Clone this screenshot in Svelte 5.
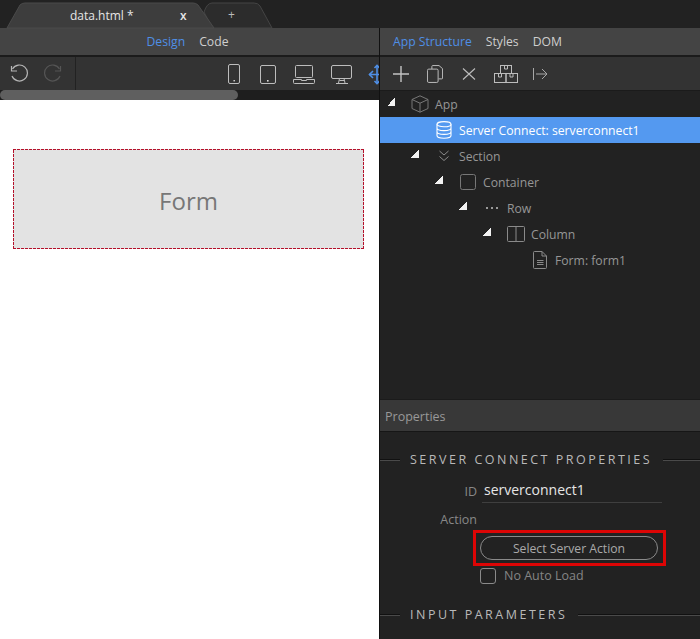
<script>
  const devices = [
    { w: 19, h: 26, shape: "phone" },
    { w: 19, h: 26, shape: "tablet" },
    { w: 24, h: 26, shape: "laptop" },
    { w: 24, h: 26, shape: "desktop" }
  ];
  const rows = [
    { label: "Section", depth: 1, icon: "section", arrow: true },
    { label: "Container", depth: 2, icon: "container", arrow: true },
    { label: "Row", depth: 3, icon: "row", arrow: true },
    { label: "Column", depth: 4, icon: "column", arrow: true },
    { label: "Form: form1", depth: 5, icon: "form", arrow: false }
  ];
</script>

<div class="app">
  <div class="tabbar">
    <div class="tab active">
      <svg class="tab-bg" width="200" height="28" viewBox="0 0 200 28">
        <path d="M0 28 L13 5 Q15 3 18 3 L186 3 Q189 3 191 5 L207 28 Z" fill="#3d3d3d" stroke="#4a4a4a" />
      </svg>
      <span class="tab-name">data.html *</span>
      <span class="tab-close">x</span>
    </div>
    <div class="tab add">
      <svg class="tab-bg" width="73" height="28" viewBox="0 0 73 28">
        <path d="M12 28 L4 12 Q7 3 12 3 L54 3 Q58 3 60 6 L72 28 Z" fill="#2c2c2c" stroke="#444" />
      </svg>
      <span class="tab-plus">+</span>
    </div>
  </div>

  <div class="columns">
    <div class="left">
      <div class="subnav center">
        <span class="blue">Design</span>
        <span>Code</span>
      </div>
      <div class="toolbar left-tools">
        <div class="history">
          <svg width="20" height="20" viewBox="0 0 20 20" fill="none" stroke="#b5b5b5" stroke-width="1.2">
            <path d="M3.5 5 A8 8 0 1 1 3 12" />
            <path d="M2.5 2 V7 H8" />
          </svg>
          <svg width="20" height="20" viewBox="0 0 20 20" fill="none" stroke="#555" stroke-width="1.2">
            <path d="M16.5 5 A8 8 0 1 0 17 12" />
            <path d="M17.5 2 V7 H12" />
          </svg>
        </div>
        <div class="devices">
          {#each devices as d}
            <svg width={d.w} height={d.h} viewBox="0 0 {d.w} {d.h}" fill="none" stroke="#bdbdbd" stroke-width="1">
              {#if d.shape === "phone"}
                <rect x="2.5" y="3.5" width="11" height="19" rx="1.5" />
                <rect x="7.5" y="19" width="1.4" height="1.4" fill="#ddd" stroke="none" />
              {:else if d.shape === "tablet"}
                <rect x="1.5" y="4.5" width="15" height="18" rx="1.5" />
                <rect x="8" y="19" width="1.6" height="1.6" fill="#ddd" stroke="none" />
              {:else if d.shape === "laptop"}
                <rect x="3.5" y="4.5" width="17" height="12" rx="1" />
                <path d="M1.5 18.5 H9.5 V19.5 H14.5 V18.5 H22.5 V21.5 Q22.5 22.5 21.5 22.5 H2.5 Q1.5 22.5 1.5 21.5 Z" />
              {:else}
                <rect x="1.5" y="4.5" width="20" height="13" rx="1.5" />
                <path d="M9.5 17.5 L8.5 22 M14 17.5 L15 22 M6 22.5 H18 M9.5 19.5 H14" />
              {/if}
            </svg>
          {/each}
          <svg width="12" height="26" viewBox="0 0 12 26" fill="none" stroke="#4f8fe6" stroke-width="1.6">
            <path d="M1 13.5 H12 M9 5 V22" />
            <path d="M5 10 L1.5 13.5 L5 17 M6.5 7 L9 4.5 L11.5 7 M6.5 20 L9 22.5 L11.5 20" />
          </svg>
        </div>
      </div>
      <div class="scrolltrack"><div class="scrollthumb"></div></div>
      <div class="canvas">
        <div class="form-box">Form</div>
      </div>
    </div>

    <div class="right">
      <div class="subnav">
        <span class="blue">App Structure</span>
        <span>Styles</span>
        <span>DOM</span>
      </div>
      <div class="toolbar right-tools">
        <svg width="16" height="16" viewBox="0 0 16 16" stroke="#c4c4c4" stroke-width="1.4" fill="none"><path d="M8 0 V16 M0 8 H16" /></svg>
        <svg width="16" height="18" viewBox="0 0 18 20" stroke="#bdbdbd" stroke-width="1.1" fill="none">
          <path d="M5.5 4.5 V1.5 Q5.5 .5 6.5 .5 H13.5 L17.5 4 V14.5 Q17.5 15.5 16.5 15.5 H13" />
          <rect x=".5" y="4.5" width="12" height="15" rx="1.5" />
        </svg>
        <svg width="15" height="12" viewBox="0 0 15 12" stroke="#bdbdbd" stroke-width="1.1" fill="none"><path d="M2 .5 L14 11.5 M14 .5 L2 11.5" /></svg>
        <svg width="24" height="18" viewBox="0 0 24 18" stroke="#bdbdbd" stroke-width="1" fill="none">
          <rect x="6.5" y=".5" width="11" height="8" />
          <rect x=".5" y="8.5" width="11.5" height="9" />
          <rect x="12" y="8.5" width="11.5" height="9" />
          <path d="M10.5 .5 V4 H13.5 V.5 M4.5 8.5 V12 H7.5 V8.5 M16 8.5 V12 H19 V8.5" />
        </svg>
        <svg class="indent" width="16" height="14" viewBox="0 0 16 14" stroke="#a8a8a8" stroke-width="1" fill="none"><path d="M1.5 1 V13 M4 7 H15 M10 2 L15 7 L10 12" /></svg>
      </div>

      <div class="tree">
        <div class="tree-row depth-0">
          <i class="caret"></i>
          <svg class="node-icon" width="18" height="18" viewBox="0 0 18 18" fill="none" stroke="#777" stroke-width="1">
            <path d="M9 .8 L17 4.5 V13.5 L9 17.2 L1 13.5 V4.5 Z M1 4.5 L9 8.2 L17 4.5 M9 8.2 V17.2" />
          </svg>
          <span>App</span>
        </div>
        <div class="tree-row selected">
          <svg class="db" width="16" height="18" viewBox="0 0 16 18" fill="none" stroke="#fff" stroke-width="1.1">
            <ellipse cx="8" cy="3.2" rx="7" ry="2.6" />
            <path d="M1 3.2 V14.5 C1 16 4 17.2 8 17.2 S15 16 15 14.5 V3.2 M1 7 C1 8.5 4 9.6 8 9.6 S15 8.5 15 7 M1 10.8 C1 12.3 4 13.4 8 13.4 S15 12.3 15 10.8" />
          </svg>
          <span>Server Connect: serverconnect1</span>
        </div>
        {#each rows as r}
          <div class="tree-row" style="padding-left: {r.depth * 24 + 7}px">
            {#if r.arrow}<i class="caret"></i>{:else}<i class="caret none"></i>{/if}
            <span class="icon-box">
              {#if r.icon === "section"}
                <svg width="12" height="14" viewBox="0 0 12 14" fill="none" stroke="#8a8a8a" stroke-width="1"><path d="M1.5 2 L6 6 L10.5 2 M1.5 7.5 L6 11.5 L10.5 7.5" /></svg>
              {:else if r.icon === "container"}
                <svg width="16" height="16" viewBox="0 0 16 16" fill="none" stroke="#777" stroke-width="1"><rect x=".5" y=".5" width="15" height="15" rx="2" /></svg>
              {:else if r.icon === "row"}
                <svg width="12" height="4" viewBox="0 0 12 4" fill="#999"><rect x="0" y="1" width="2" height="2" /><rect x="5" y="1" width="2" height="2" /><rect x="10" y="1" width="2" height="2" /></svg>
              {:else if r.icon === "column"}
                <svg width="18" height="16" viewBox="0 0 18 16" fill="none" stroke="#8a8a8a" stroke-width="1"><rect x=".5" y=".5" width="17" height="15" rx="1" /><path d="M9 .5 V15.5" /></svg>
              {:else}
                <svg width="14" height="18" viewBox="0 0 14 18" fill="none" stroke="#8a8a8a" stroke-width="1"><path d="M.5 1.5 Q.5 .5 1.5 .5 H9 L13.5 5 V16.5 Q13.5 17.5 12.5 17.5 H1.5 Q.5 17.5 .5 16.5 Z M9 .5 V5 H13.5 M4 9.5 H10.5 M4 11.5 H10.5 M4 13.5 H10.5" /></svg>
              {/if}
            </span>
            <span>{r.label}</span>
          </div>
        {/each}
      </div>

      <div class="props-head">Properties</div>
      <div class="props">
        <div class="legend"><span>SERVER CONNECT PROPERTIES</span></div>
        <div class="field">
          <label for="sc-id">ID</label>
          <input id="sc-id" value="serverconnect1" />
        </div>
        <div class="field action"><span class="field-label">Action</span></div>
        <div class="action-wrap">
          <button class="action-btn">Select Server Action</button>
        </div>
        <div class="check"><i class="box"></i><span>No Auto Load</span></div>
        <div class="legend second"><span>INPUT PARAMETERS</span></div>
      </div>
    </div>
  </div>
</div>

<style>
  :global(body) {
    margin: 0;
    background: #222;
  }
  .app {
    width: 700px;
    height: 639px;
    overflow: hidden;
    display: flex;
    flex-direction: column;
    font-family: "Open Sans", "Noto Sans", sans-serif;
    font-size: 12px;
    color: #b9b9b9;
  }
  .tabbar {
    height: 28px;
    background: #222;
    display: flex;
    padding-left: 7px;
    box-sizing: border-box;
  }
  .tab {
    position: relative;
    height: 28px;
  }
  .tab-bg {
    position: absolute;
    left: 0;
    top: 0;
    overflow: visible;
  }
  .tab.active {
    width: 193px;
    z-index: 1;
  }
  .tab.add {
    width: 73px;
  }
  .tab-name {
    position: absolute;
    left: 63px;
    top: 7px;
    color: #e6e6e6;
    font-size: 12px;
  }
  .tab-close {
    position: absolute;
    left: 173px;
    top: 7px;
    color: #e6e6e6;
    font-weight: 600;
  }
  .tab-plus {
    position: absolute;
    left: 28px;
    top: 6px;
    color: #bbb;
  }
  .columns {
    flex: 1;
    display: flex;
    min-height: 0;
  }
  .left {
    width: 379px;
    display: flex;
    flex-direction: column;
    background: #fff;
    border-right: 1px solid #111;
    overflow: hidden;
  }
  .right {
    width: 320px;
    display: flex;
    flex-direction: column;
    background: #222;
  }
  .subnav {
    height: 28px;
    background: #444;
    border-bottom: 1px solid #1b1b1b;
    box-sizing: border-box;
    display: flex;
    align-items: center;
    gap: 14px;
    padding-left: 13px;
    color: #cfcfcf;
    font-size: 12.2px;
    flex-shrink: 0;
  }
  .subnav.center {
    justify-content: center;
    padding-left: 0;
    padding-right: 4px;
  }
  .blue {
    color: #4f8fe6;
  }
  .toolbar {
    height: 34px;
    background: #333;
    border-top: 1px solid #1b1b1b;
    box-sizing: border-box;
    display: flex;
    align-items: center;
    flex-shrink: 0;
  }
  .left-tools {
    justify-content: space-between;
  }
  .history {
    width: 76px;
    height: 100%;
    box-sizing: border-box;
    display: flex;
    align-items: center;
    gap: 14px;
    padding-left: 9px;
    border-right: 1px solid #222;
  }
  .devices {
    display: flex;
    align-items: center;
    gap: 14px;
    margin-right: -1px;
  }
  .scrolltrack {
    height: 10px;
    background: #1e1e1e;
    flex-shrink: 0;
  }
  .scrollthumb {
    width: 238px;
    height: 10px;
    border-radius: 5px;
    background: #5f5f5f;
  }
  .canvas {
    flex: 1;
    padding: 49px 15px 0 13px;
    background: #fff;
  }
  .form-box {
    height: 100px;
    box-sizing: border-box;
    background-color: #e3e3e3;
    background-image:
      repeating-linear-gradient(90deg, #b5102a 0 3px, transparent 3px 4px),
      repeating-linear-gradient(90deg, #b5102a 0 3px, transparent 3px 4px),
      repeating-linear-gradient(0deg, #b5102a 0 3px, transparent 3px 4px),
      repeating-linear-gradient(0deg, #b5102a 0 3px, transparent 3px 4px);
    background-size: 100% 1px, 100% 1px, 1px 100%, 1px 100%;
    background-position: 0 0, 0 100%, 0 0, 100% 0;
    background-repeat: no-repeat;
    display: flex;
    align-items: center;
    justify-content: center;
    font-size: 24px;
    color: #777;
    padding-top: 2px;
  }
  .right-tools {
    height: 35px;
    gap: 18px;
    padding-left: 13px;
    border-bottom: 1px solid #1b1b1b;
  }
  .indent {
    margin-left: -4px;
  }
  .tree {
    height: 308px;
    background: #222;
    flex-shrink: 0;
  }
  .tree-row {
    height: 26px;
    display: flex;
    align-items: center;
    color: #969696;
    box-sizing: border-box;
    font-size: 12.2px;
  }
  .depth-0 {
    padding-left: 7px;
  }
  .caret {
    display: block;
    width: 8px;
    height: 8px;
    margin-right: 16px;
    margin-bottom: 4px;
    flex-shrink: 0;
    background: linear-gradient(135deg, transparent 50%, #f2f2f2 50%);
  }
  .caret.none {
    background: none;
  }
  .node-icon {
    margin-right: 6px;
  }
  .icon-box {
    width: 18px;
    display: flex;
    justify-content: center;
    margin-right: 6px;
    flex-shrink: 0;
  }
  .selected {
    background: #5499f0;
    color: #fff;
    padding-left: 56px;
    gap: 7px;
  }
  .props-head {
    height: 33px;
    background: #383838;
    border-top: 1px solid #1b1b1b;
    border-bottom: 1px solid #161616;
    box-sizing: border-box;
    padding: 1px 0 0 5px;
    display: flex;
    align-items: center;
    color: #999;
    font-size: 12.5px;
    flex-shrink: 0;
  }
  .props {
    flex: 1;
    background: #222;
  }
  .legend {
    display: flex;
    align-items: center;
    margin-top: 19px;
    color: #b9b9b9;
    font-size: 12.5px;
    letter-spacing: 2.5px;
    line-height: 18px;
  }
  .legend::before {
    content: "";
    width: 20px;
    height: 1px;
    background: #111;
    border-bottom: 1px solid #4a4a4a;
    margin-right: 10px;
  }
  .legend::after {
    content: "";
    flex: 1;
    height: 1px;
    background: #111;
    border-bottom: 1px solid #4a4a4a;
    margin-left: 11px;
  }
  .legend.second {
    margin-top: 22px;
  }
  .field {
    display: flex;
    align-items: center;
    margin-top: 10px;
  }
  .field label,
  .field-label {
    width: 97px;
    text-align: right;
    color: #888;
    font-size: 12.5px;
  }
  .field input {
    width: 180px;
    height: 24px;
    margin-left: 5px;
    padding: 0 0 2px 2px;
    box-sizing: border-box;
    background: transparent;
    border: none;
    border-bottom: 1px solid #3f3f3f;
    color: #e6e6e6;
    font: inherit;
    font-size: 14px;
  }
  .field.action {
    margin-top: 8px;
  }
  .action-wrap {
    margin: 2px 0 0 93px;
    width: 193px;
    height: 36px;
    box-sizing: border-box;
    border: 3px solid #dd0505;
    padding: 3px 4px;
  }
  .action-btn {
    display: block;
    width: 178px;
    height: 24px;
    border: 1px solid #8a8a8a;
    border-radius: 12px;
    background: transparent;
    color: #aaa;
    font: inherit;
    font-size: 12.2px;
    padding: 0;
  }
  .check {
    display: flex;
    align-items: center;
    gap: 8px;
    margin: 1px 0 0 100px;
    color: #858585;
    font-size: 12.5px;
  }
  .box {
    width: 14px;
    height: 14px;
    border: 1px solid #8a8a8a;
    border-radius: 3px;
  }
</style>
